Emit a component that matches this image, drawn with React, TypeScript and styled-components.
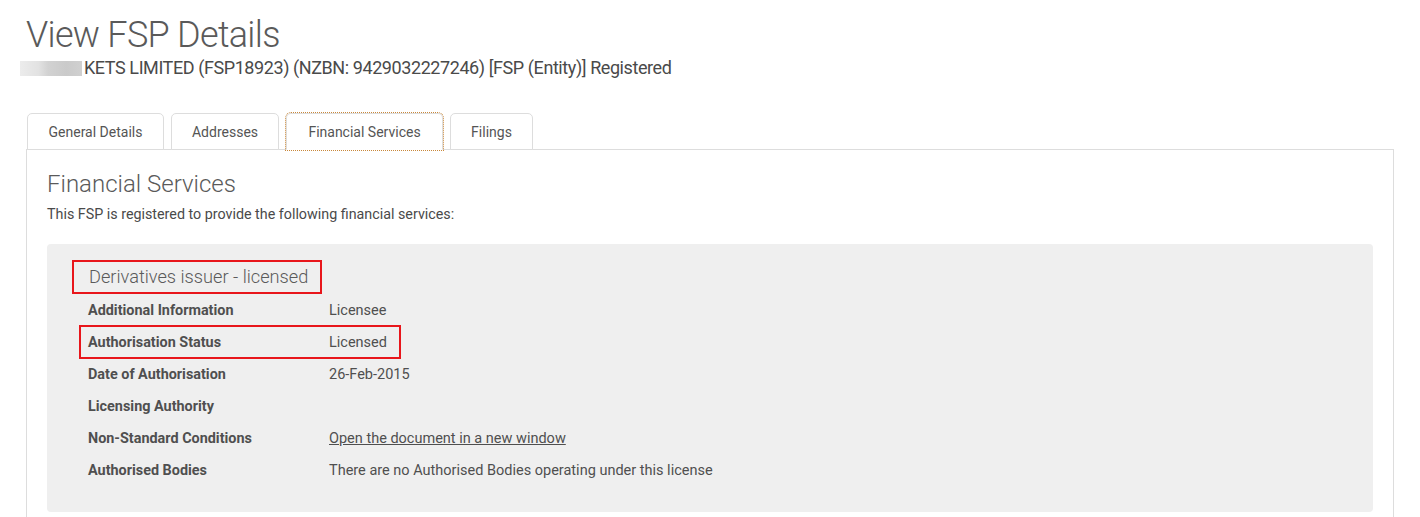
import React from "react";
import styled, { createGlobalStyle } from "styled-components";

const Global = createGlobalStyle`
  html, body { margin: 0; padding: 0; background: #fff; }
  body { font-family: Roboto, "Open Sans", sans-serif; color: #555; }
  * { box-sizing: border-box; }
`;

const Page = styled.div`
  padding: 12px 26px 0 26px;
  height: 517px;
  overflow: hidden;
`;

const Title = styled.h1`
  margin: 0;
  font-weight: 300;
  font-size: 36px;
  letter-spacing: -0.7px;
  line-height: 46px;
  color: #5a5a5a;
`;

const Subtitle = styled.div`
  display: flex;
  align-items: center;
  margin: -2px 0 0 -6px;
  font-size: 18px;
  letter-spacing: -0.42px;
  line-height: 24px;
  color: #4a4a4a;
`;

const Redacted = styled.span`
  display: inline-block;
  width: 62px;
  height: 15px;
  margin-right: 2px;
  background: linear-gradient(90deg, #ececec 0%, #e2e2e2 30%, #d2d2d2 45%, #cacaca 75%, #d0d0d0 100%);
`;

const TabList = styled.ul`
  display: flex;
  list-style: none;
  margin: 33px 0 0 0;
  padding: 0 0 0 1px;
  gap: 7px;
  position: relative;
  z-index: 1;
`;

const Tab = styled.li<{ $active?: boolean; $w: number }>`
  width: ${(p) => p.$w}px;
  height: 37px;
  display: flex;
  align-items: center;
  justify-content: center;
  font-size: 14px;
  color: #555;
  background: #fff;
  border: 1px solid #ddd;
  border-bottom: 1px solid ${(p) => (p.$active ? "#fff" : "#ddd")};
  border-radius: 5px 5px 0 0;
  outline: ${(p) => (p.$active ? "1px dotted #c8873a" : "none")};
  outline-offset: 0px;
`;

const Panel = styled.div`
  margin-top: -1px;
  border: 1px solid #ddd;
  border-bottom: none;
  padding: 19px 20px 0 20px;
  height: 400px;
`;

const SectionTitle = styled.h2`
  margin: 0;
  font-weight: 300;
  font-size: 24px;
  line-height: 30px;
  color: #5a5a5a;
`;

const Intro = styled.p`
  margin: 5px 0 0 0;
  font-size: 14.3px;
  line-height: 20px;
  color: #4a4a4a;
`;

const ServiceBox = styled.div`
  margin-top: 20px;
  background: #efefef;
  border-radius: 4px;
  padding: 16px 0 29px 25px;
  height: 268px;
`;

const Highlight = styled.div`
  display: inline-block;
  border: 2px solid #e8161b;
`;

const ServiceTitle = styled(Highlight)`
  font-weight: 300;
  font-size: 18.2px;
  line-height: 30px;
  padding: 0 12px 0 15px;
  color: #5a5a5a;
`;

const Rows = styled.div`
  display: flex;
  flex-direction: column;
  align-items: flex-start;
`;

const Row = styled.div<{ $hl?: boolean }>`
  display: grid;
  grid-template-columns: 241px auto;
  align-items: center;
  height: 32px;
  padding-left: 16px;
  ${(p) =>
    p.$hl &&
    `
    border: 2px solid #e8161b;
    height: 34px;
    margin: -1px 0;
    margin-left: 7px;
    padding-left: 7px;
    padding-right: 12px;
  `}
`;

const Label = styled.div`
  font-weight: 700;
  font-size: 14.4px;
  color: #4f4f4f;
`;

const Value = styled.div`
  font-size: 14.5px;
  color: #4f4f4f;
`;

const Link = styled.a`
  color: #4f4f4f;
  text-decoration: underline;
`;

const rows: { label: string; value?: React.ReactNode; hl?: boolean }[] = [
  { label: "Additional Information", value: "Licensee" },
  { label: "Authorisation Status", value: "Licensed", hl: true },
  { label: "Date of Authorisation", value: "26-Feb-2015" },
  { label: "Licensing Authority" },
  {
    label: "Non-Standard Conditions",
    value: <Link href="#">Open the document in a new window</Link>,
  },
  {
    label: "Authorised Bodies",
    value: "There are no Authorised Bodies operating under this license",
  },
];

export default function App() {
  return (
    <>
      <Global />
      <Page>
        <Title>View FSP Details</Title>
        <Subtitle>
          <Redacted />
          KETS LIMITED (FSP18923) (NZBN: 9429032227246) [FSP (Entity)] Registered
        </Subtitle>
        <TabList>
          <Tab $w={137}>General Details</Tab>
          <Tab $w={108}>Addresses</Tab>
          <Tab $w={157} $active>Financial Services</Tab>
          <Tab $w={83}>Filings</Tab>
        </TabList>
        <Panel>
          <SectionTitle>Financial Services</SectionTitle>
          <Intro>This FSP is registered to provide the following financial services:</Intro>
          <ServiceBox>
            <ServiceTitle>Derivatives issuer - licensed</ServiceTitle>
            <Rows>
              {rows.map((r) => (
                <Row key={r.label} $hl={r.hl}>
                  <Label>{r.label}</Label>
                  <Value>{r.value}</Value>
                </Row>
              ))}
            </Rows>
          </ServiceBox>
        </Panel>
      </Page>
    </>
  );
}
